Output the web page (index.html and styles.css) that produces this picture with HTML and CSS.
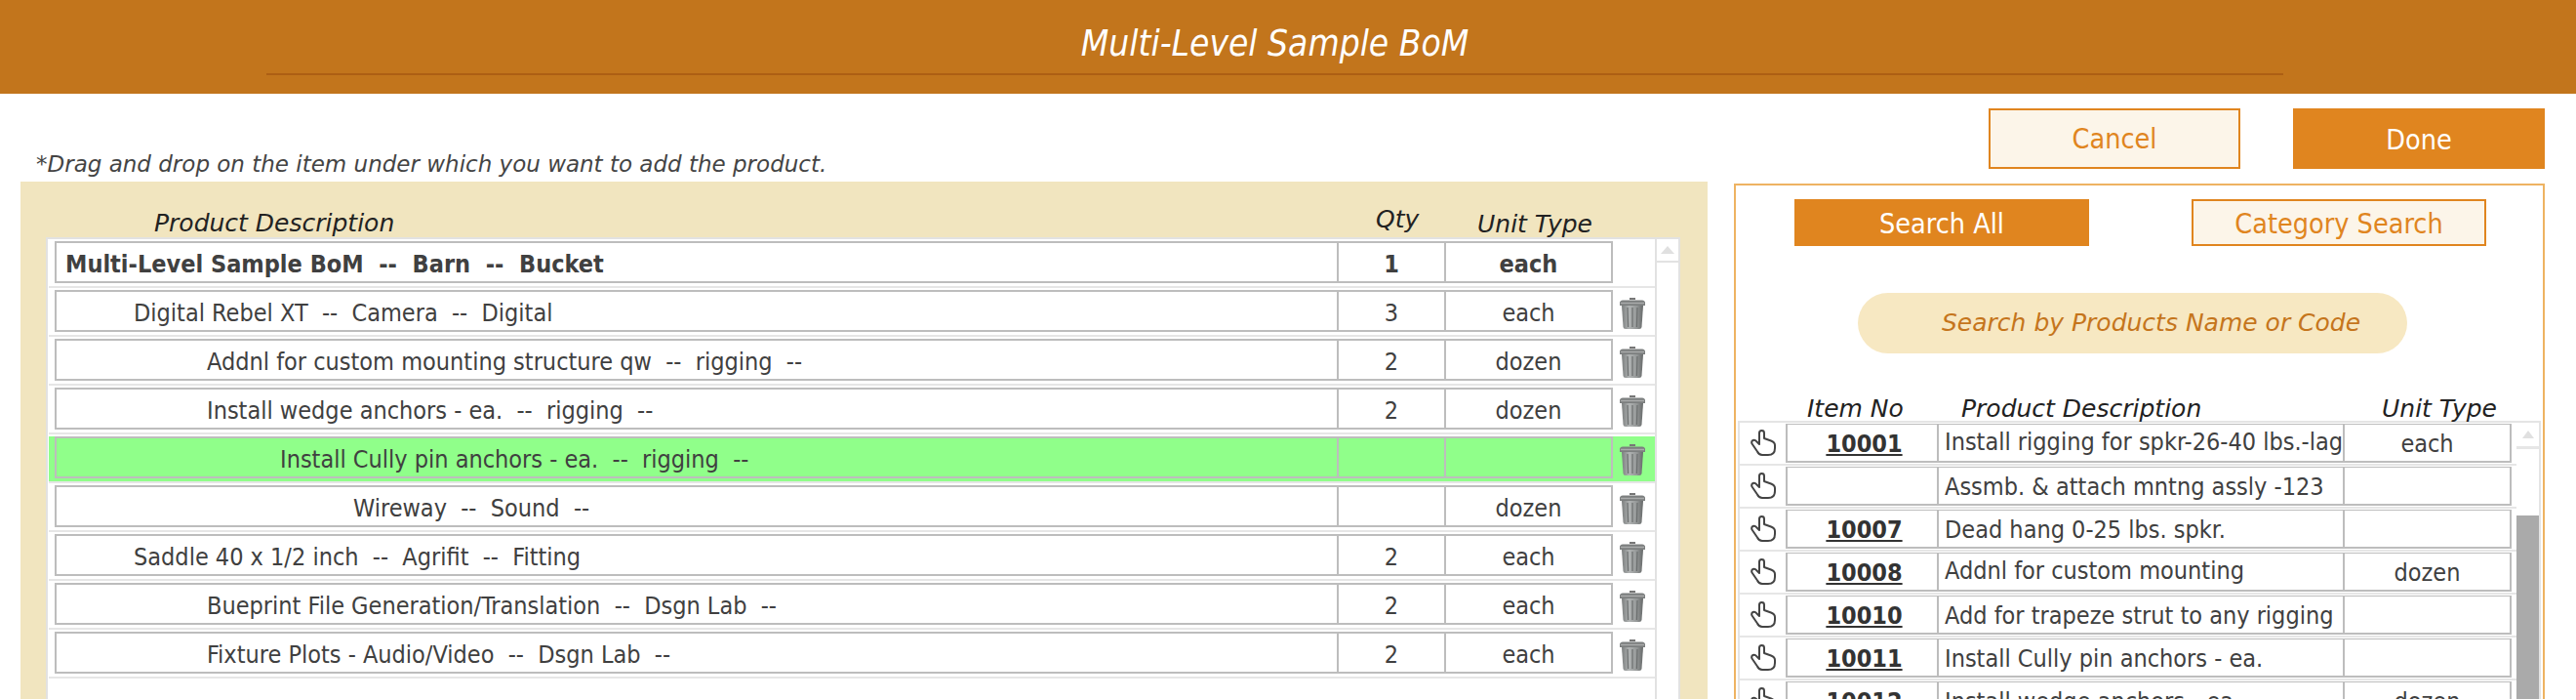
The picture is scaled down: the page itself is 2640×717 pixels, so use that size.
FILE: index.html
```html
<!DOCTYPE html>
<html lang="en">
<head>
<meta charset="utf-8">
<title>Multi-Level Sample BoM</title>
<link rel="stylesheet" href="styles.css">
</head>
<body>
<svg class="defs" width="0" height="0" aria-hidden="true">
  <defs>
    <linearGradient id="can" x1="0" x2="1" y1="0" y2="0">
      <stop offset="0" stop-color="#7b7e7e"/>
      <stop offset=".35" stop-color="#b0b3b3"/>
      <stop offset=".7" stop-color="#949797"/>
      <stop offset="1" stop-color="#666969"/>
    </linearGradient>
    <symbol id="trash" viewBox="0 0 26 33">
      <path d="M10 3V1h6v2z" fill="#777"/>
      <path d="M0 9V6q0-2 3-2.500h20q3 .5 3 2.500v3z" fill="#7c7f7f"/>
      <path d="M1 6.500h24" stroke="#a9abab" stroke-width="1.500"/>
      <path d="M2 9h22l-1.500 22q-.2 2-2.500 2H6q-2.300 0-2.500-2z" fill="url(#can)"/>
      <path d="M8 11l.6 20M13 11v20M18 11l-.6 20" stroke="#6b6e6e" stroke-width="1.200"/>
    </symbol>
    <symbol id="hand" viewBox="0 0 26 27">
      <path d="M9 15V3.500a2.500 2.500 0 0 1 5 0V9l7 2.500q4 1.500 4 4.500v3q0 7-7 7h-6q-3.500 0-5-3.500L1.500 14.500q-1-2.500 1-3.500t3.500 1l3 3z" fill="#fff" stroke="#444" stroke-width="2" stroke-linejoin="round"/>
    </symbol>
  </defs>
</svg>

<header class="topbar">
  <h1 class="title">Multi-Level Sample BoM</h1>
</header>

<main class="workspace">
  <section class="bom">
    <p class="note">*Drag and drop on the item under which you want to add the product.</p>
    <div class="bom-panel">
      <div class="bom-head">
        <span class="head-desc">Product Description</span>
        <span class="head-qty">Qty</span>
        <span class="head-unit">Unit Type</span>
      </div>
      <div class="bom-list">
        <div class="bom-rows">
          <div class="bom-row top"><div class="cell desc lvl0">Multi-Level Sample BoM&nbsp; --&nbsp; Barn&nbsp; --&nbsp; Bucket</div><div class="cell num">1</div><div class="cell num">each</div><div></div></div>
          <div class="bom-row"><div class="cell desc lvl1">Digital Rebel XT&nbsp; --&nbsp; Camera&nbsp; --&nbsp; Digital</div><div class="cell num">3</div><div class="cell num">each</div><svg class="trash"><use href="#trash"/></svg></div>
          <div class="bom-row"><div class="cell desc lvl2">Addnl for custom mounting structure qw&nbsp; --&nbsp; rigging&nbsp; --</div><div class="cell num">2</div><div class="cell num">dozen</div><svg class="trash"><use href="#trash"/></svg></div>
          <div class="bom-row"><div class="cell desc lvl2">Install wedge anchors - ea.&nbsp; --&nbsp; rigging&nbsp; --</div><div class="cell num">2</div><div class="cell num">dozen</div><svg class="trash"><use href="#trash"/></svg></div>
          <div class="bom-row active"><div class="cell desc lvl3">Install Cully pin anchors - ea.&nbsp; --&nbsp; rigging&nbsp; --</div><div class="cell num"></div><div class="cell num"></div><svg class="trash"><use href="#trash"/></svg></div>
          <div class="bom-row"><div class="cell desc lvl4">Wireway&nbsp; --&nbsp; Sound&nbsp; --</div><div class="cell num"></div><div class="cell num">dozen</div><svg class="trash"><use href="#trash"/></svg></div>
          <div class="bom-row"><div class="cell desc lvl1">Saddle 40 x 1/2 inch&nbsp; --&nbsp; Agrifit&nbsp; --&nbsp; Fitting</div><div class="cell num">2</div><div class="cell num">each</div><svg class="trash"><use href="#trash"/></svg></div>
          <div class="bom-row"><div class="cell desc lvl2">Bueprint File Generation/Translation&nbsp; --&nbsp; Dsgn Lab&nbsp; --</div><div class="cell num">2</div><div class="cell num">each</div><svg class="trash"><use href="#trash"/></svg></div>
          <div class="bom-row"><div class="cell desc lvl2">Fixture Plots - Audio/Video&nbsp; --&nbsp; Dsgn Lab&nbsp; --</div><div class="cell num">2</div><div class="cell num">each</div><svg class="trash"><use href="#trash"/></svg></div>
        </div>
        <div class="scrollbar"><div class="scroll-up"><span class="arrow"></span></div></div>
      </div>
    </div>
  </section>

  <section class="picker">
    <div class="actions">
      <button class="btn outline action">Cancel</button>
      <button class="btn solid action done">Done</button>
    </div>
    <div class="picker-panel">
      <div class="tabs">
        <button class="btn solid tab">Search All</button>
        <button class="btn outline tab">Category Search</button>
      </div>
      <div class="search">Search by Products Name or Code</div>
      <div class="res-head">
        <span class="res-item">Item No</span>
        <span class="res-desc">Product Description</span>
        <span class="res-unit">Unit Type</span>
      </div>
      <div class="res-list">
        <div class="res-rows">
          <div class="res-row"><svg class="hand"><use href="#hand"/></svg><div class="rc item">10001</div><div class="rc text wrapped">Install rigging for spkr-26-40 lbs.-lag bolts</div><div class="rc unit">each</div></div>
          <div class="res-row"><svg class="hand"><use href="#hand"/></svg><div class="rc item"></div><div class="rc text">Assmb. &amp; attach mntng assly -123</div><div class="rc unit"></div></div>
          <div class="res-row"><svg class="hand"><use href="#hand"/></svg><div class="rc item">10007</div><div class="rc text">Dead hang 0-25 lbs. spkr.</div><div class="rc unit"></div></div>
          <div class="res-row"><svg class="hand"><use href="#hand"/></svg><div class="rc item">10008</div><div class="rc text wrapped">Addnl for custom mounting structure qw</div><div class="rc unit">dozen</div></div>
          <div class="res-row"><svg class="hand"><use href="#hand"/></svg><div class="rc item">10010</div><div class="rc text">Add for trapeze strut to any rigging</div><div class="rc unit"></div></div>
          <div class="res-row"><svg class="hand"><use href="#hand"/></svg><div class="rc item">10011</div><div class="rc text">Install Cully pin anchors - ea.</div><div class="rc unit"></div></div>
          <div class="res-row"><svg class="hand"><use href="#hand"/></svg><div class="rc item">10012</div><div class="rc text">Install wedge anchors - ea.</div><div class="rc unit">dozen</div></div>
        </div>
        <div class="res-scroll">
          <div class="res-up"><span class="arrow small"></span></div>
          <div class="res-gap"></div>
          <div class="res-thumb"></div>
        </div>
      </div>
    </div>
  </section>
</main>
</body>
</html>
```

FILE: styles.css
```css
* { box-sizing: border-box; }
html, body { margin: 0; height: 717px; overflow: hidden; background: #fff; }
body { font-family: "DejaVu Sans Condensed", "DejaVu Sans", sans-serif; font-stretch: condensed; font-size: 25px; color: #404040; }
.defs { position: absolute; }

.topbar { height: 96px; background: #c2751c; padding-top: 24px; }
.title { margin: 0 300px 0 273px; height: 53px; border-bottom: 2px solid #ad5f14; color: #fff; font-size: 36.8px; font-weight: 400; font-style: italic; line-height: 42px; text-align: center; }

.workspace { display: flex; height: 620px; padding-left: 21px; }
.bom { width: 1729px; height: 620px; display: flex; flex-direction: column; }
.note { margin: 60px 0 0 16px; height: 31px; line-height: 24px; font-family: "DejaVu Sans", sans-serif; font-stretch: normal; font-size: 23px; font-style: italic; color: #444; white-space: nowrap; }
.bom-panel { flex: 1; background: #f1e5bf; padding: 0 28px 0 26px; }
.bom-head { position: relative; height: 57px; font-family: "DejaVu Sans", sans-serif; font-stretch: normal; font-style: italic; font-size: 25px; color: #222; }
.head-desc { position: absolute; left: 111px; top: 28px; }
.head-qty { position: absolute; left: 1363px; top: 24px; }
.head-unit { position: absolute; left: 1467px; top: 29px; }

.bom-list { display: flex; height: 473px; background: #fff; border: 2px solid #e2e2e2; border-bottom: 0; }
.bom-rows { width: 1647px; flex: none; }
.bom-row { display: grid; grid-template-columns: 1316px 110px 171px 43px; height: 50px; margin-left: 1px; padding: 2px 0 3px 6px; border-bottom: 2px solid #e6e6e6; align-items: center; }
.bom-row.active { background: #90ff8a; height: 48px; margin-top: 2px; padding: 0 0 0 6px; align-items: start; }
.cell { height: 43px; padding-top: 3px; border: 2px solid #bdbdbd; border-left: 0; line-height: 37px; white-space: nowrap; overflow: hidden; }
.cell.desc { border-left: 2px solid #bdbdbd; }
.cell.num { text-align: center; }
.lvl0 { padding-left: 9px; }
.lvl1 { padding-left: 79px; }
.lvl2 { padding-left: 154px; }
.lvl3 { padding-left: 229px; }
.lvl4 { padding-left: 304px; }
.top .cell { font-weight: 700; }
.trash { width: 26px; height: 33px; margin: 4px 0 0 7px; }
.active .trash { margin-top: 7px; }

.scrollbar { width: 24px; flex: none; border-left: 2px solid #e2e2e2; }
.scroll-up { height: 24px; border-bottom: 2px solid #e2e2e2; display: flex; align-items: center; justify-content: center; }
.arrow { width: 0; height: 0; border: 7px solid transparent; border-top: 0; border-bottom: 8px solid #e0e0e0; }
.arrow.small { border-width: 0 6px 8px; }

.picker { width: 831px; margin-left: 27px; display: flex; flex-direction: column; }
.actions { display: flex; justify-content: flex-end; gap: 54px; padding-top: 15px; height: 92px; }
.btn { font: inherit; font-stretch: condensed; margin: 0; padding: 0; border: 2px solid #e0851f; border-radius: 0; }
.btn.solid { background: #e0851f; color: #fff; }
.btn.outline { background: #fcf5e9; color: #e0851f; }
.action { width: 258px; height: 62px; font-size: 28.5px; }
.action.done { padding-top: 3px; }
.picker-panel { flex: 1; border: 2px solid #eeb362; border-bottom: 0; overflow: hidden; }
.tabs { display: flex; justify-content: space-between; margin: 14px 58px 0 60px; }
.tab { width: 302px; height: 48px; padding-top: 2px; font-size: 28.5px; }
.search { width: 563px; height: 62px; margin: 48px 0 0 125px; padding-left: 86px; border-radius: 31px; background: #f7e8c2; color: #c5751c; font-family: "DejaVu Sans", sans-serif; font-stretch: normal; font-size: 25px; font-style: italic; line-height: 62px; white-space: nowrap; }
.res-head { position: relative; height: 69px; font-family: "DejaVu Sans", sans-serif; font-stretch: normal; font-style: italic; font-size: 25px; color: #222; }
.res-item { position: absolute; left: 73px; top: 42px; }
.res-desc { position: absolute; left: 231px; top: 42px; }
.res-unit { position: absolute; left: 662px; top: 42px; }

.res-list { display: flex; margin-left: 2px; width: 823px; height: 291px; border: 2px solid #e4e4e4; border-bottom: 0; overflow: hidden; }
.res-rows { width: 796px; flex: none; }
.res-row { display: grid; grid-template-columns: 47px 157px 416px 171px; height: 44px; padding-top: 1px; border-bottom: 2px solid #e6e6e6; align-items: start; }
.hand { width: 26px; height: 27px; margin: 6px 0 0 11px; }
.rc { height: 40px; border: 2px solid #bdbdbd; border-left: 0; border-top-width: 1px; overflow: hidden; line-height: 40px; color: #404040; }
.rc.item { border-left: 2px solid #bdbdbd; padding-left: 4px; text-align: center; font-weight: 700; text-decoration: underline; color: #333; }
.rc.text { padding: 0 0 0 6px; }
.rc.wrapped { padding-top: 3px; line-height: 30px; }
.rc.unit { text-align: center; }
.res-scroll { width: 23px; flex: none; display: flex; flex-direction: column; }
.res-up { height: 27px; border-bottom: 3px solid #e6e6e6; display: flex; align-items: center; justify-content: center; }
.res-gap { height: 68px; }
.res-thumb { flex: 1; background: #aaa; }
```
